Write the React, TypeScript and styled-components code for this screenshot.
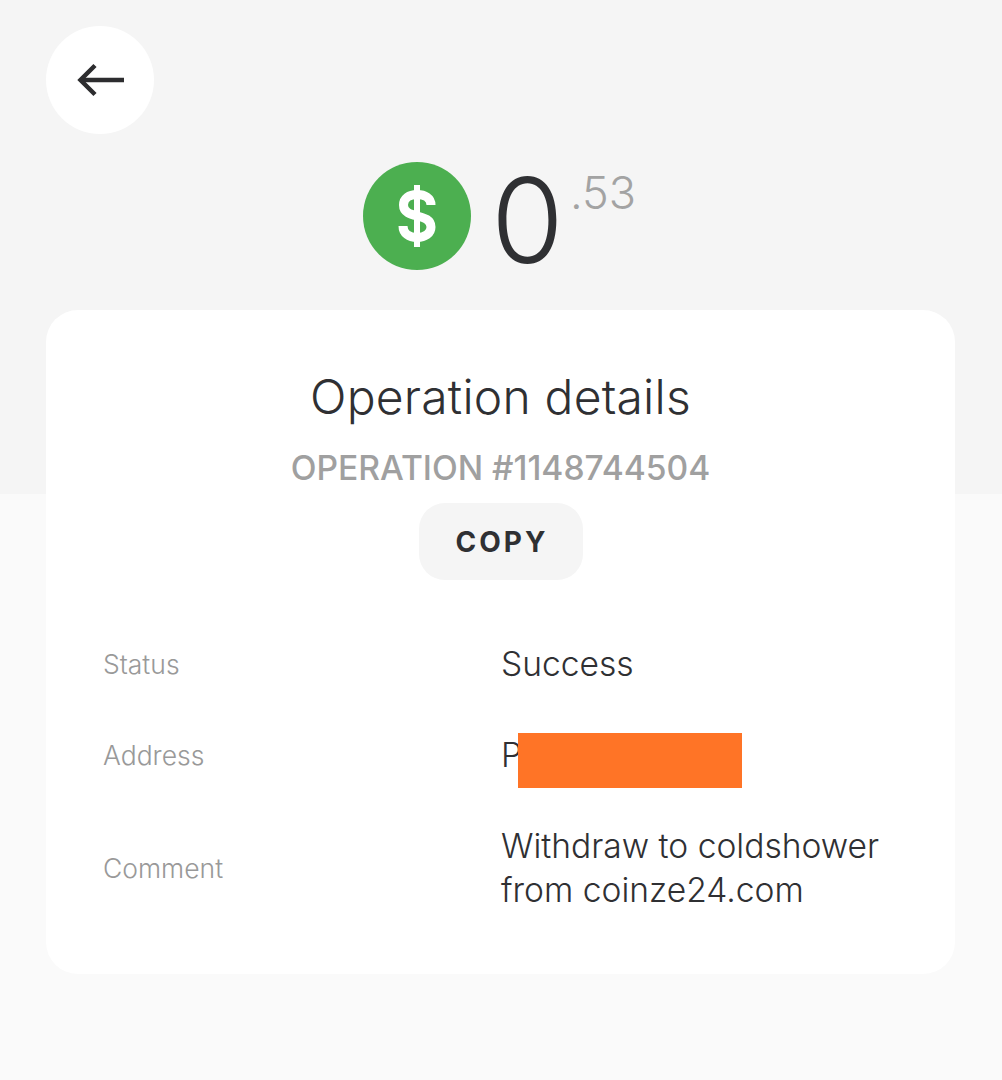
import React from "react";
import styled, { createGlobalStyle } from "styled-components";

const GlobalStyle = createGlobalStyle`
  html, body {
    margin: 0;
    padding: 0;
  }
  body {
    font-family: "Inter", "Liberation Sans", sans-serif;
    color: #2f3033;
  }
`;

const Page = styled.div`
  width: 1002px;
  height: 1080px;
  box-sizing: border-box;
  padding: 26px 47px 0 46px;
  background: linear-gradient(to bottom, #f5f5f5 0, #f5f5f5 494px, #fafafa 494px);
  overflow: hidden;
`;

const BackButton = styled.button`
  display: flex;
  align-items: center;
  justify-content: center;
  width: 108px;
  height: 108px;
  padding: 0;
  border: 0;
  border-radius: 50%;
  background: #ffffff;
`;

const BalanceRow = styled.div`
  display: flex;
  align-items: flex-start;
  margin: 28px 0 0 317px;
  height: 148px;
`;

const CoinBadge = styled.div`
  display: flex;
  align-items: center;
  justify-content: center;
  width: 108px;
  height: 108px;
  border-radius: 50%;
  background: #4caf50;
`;

const Whole = styled.span`
  margin: 4px 0 0 20px;
  font-weight: 350;
  font-size: 118px;
  line-height: 108px;
  color: #2f3033;
`;

const Cents = styled.span`
  margin: 8px 0 0 6px;
  font-weight: 300;
  font-size: 45px;
  line-height: 46px;
  color: #a3a3a3;
`;

const Card = styled.section`
  height: 664px;
  box-sizing: border-box;
  padding-top: 60px;
  background: #ffffff;
  border-radius: 32px;
`;

const Heading = styled.div`
  display: flex;
  flex-direction: column;
  align-items: center;
`;

const Title = styled.h1`
  margin: 0;
  font-weight: 300;
  font-size: 48px;
  line-height: 54px;
  letter-spacing: 0.2px;
`;

const OperationId = styled.div`
  margin-top: 24px;
  font-weight: 500;
  font-size: 33.6px;
  line-height: 40px;
  color: #a0a0a0;
`;

const CopyButton = styled.button`
  width: 164px;
  height: 77px;
  margin-top: 15px;
  padding: 0 0 0 3px;
  border: 0;
  border-radius: 26px;
  background: #f5f5f5;
  color: #2f3033;
  font-family: inherit;
  font-weight: 700;
  font-size: 28px;
  letter-spacing: 3px;
`;

const Details = styled.div`
  display: grid;
  grid-template-columns: 398px 1fr;
  align-items: center;
  row-gap: 47px;
  margin-top: 62px;
  padding-left: 57px;
`;

const Label = styled.div`
  font-weight: 300;
  font-size: 26.5px;
  color: #999999;
`;

const Value = styled.div`
  position: relative;
  font-weight: 300;
  font-size: 33.6px;
  line-height: 44px;
  color: #2f3033;
`;

const Redaction = styled.div`
  position: absolute;
  left: 17px;
  top: 0;
  width: 224px;
  height: 55px;
  background: #ff7426;
`;

const App = () => {
  return (
    <Page>
      <GlobalStyle />
      <BackButton aria-label="Back">
        <svg width="52" height="36" viewBox="0 0 52 36" fill="none" stroke="#2d2d2f" strokeWidth="4.5">
          <path d="M50 18H7" />
          <path d="M21 3.500 6.500 18 21 32.500" />
        </svg>
      </BackButton>
      <BalanceRow>
        <CoinBadge>
          <svg width="38" height="62" viewBox="0 0 38 62" fill="none" stroke="#ffffff">
            <path
              strokeWidth="9"
              d="M33 20C33 13 27 9.500 19 9.500 11 9.500 5.500 13.500 5.500 20 5.500 35 33 27 33 42 33 48.500 27 52.500 19 52.500 11 52.500 5 48.500 5 41"
            />
            <path strokeWidth="6" d="M19 0V62" />
          </svg>
        </CoinBadge>
        <Whole>0</Whole>
        <Cents>.53</Cents>
      </BalanceRow>
      <Card>
        <Heading>
          <Title>Operation details</Title>
          <OperationId>OPERATION #1148744504</OperationId>
          <CopyButton>COPY</CopyButton>
        </Heading>
        <Details>
          <Label>Status</Label>
          <Value>Success</Value>
          <Label>Address</Label>
          <Value>
            P<Redaction />
          </Value>
          <Label>Comment</Label>
          <Value>
            Withdraw to coldshower
            <br />
            from coinze24.com
          </Value>
        </Details>
      </Card>
    </Page>
  );
};

export default App;
